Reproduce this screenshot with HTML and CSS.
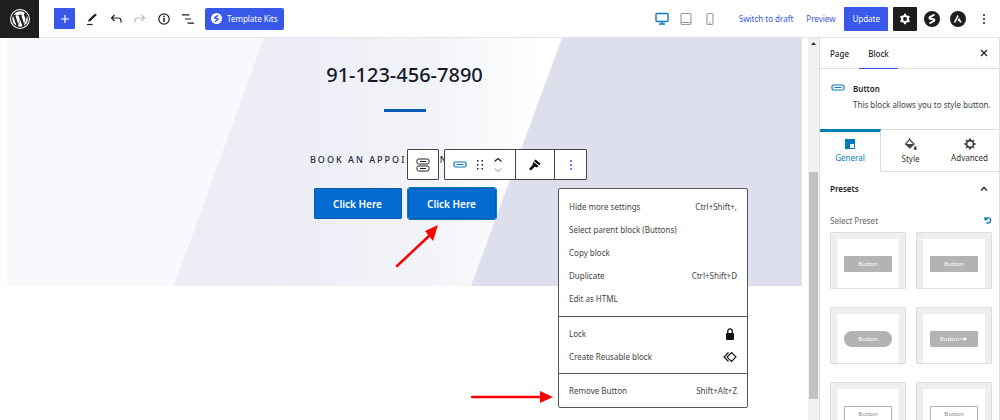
FILE: index.html
```html
<!DOCTYPE html>
<html lang="en">

<head>
    <meta charset="UTF-8">
    <title>Edit Page</title>
    <link rel="stylesheet" href="styles.css">
</head>

<body>
    <header class="topbar">
        <a href="#" class="wp-logo" aria-label="View Pages">
            <svg width="20" height="20" viewBox="0 0 24 24" fill="#fff">
                <path d="M12 0a12 12 0 1 0 0 24 12 12 0 0 0 0-24zm0 1.300a10.700 10.700 0 1 1 0 21.400 10.700 10.700 0 0 1 0-21.400z" />
                <path d="M2.800 12c0 3.700 2.100 6.800 5.200 8.300L3.600 8.200A9 9 0 0 0 2.800 12zm15.500-.5c0-1.100-.4-1.900-.8-2.500-.5-.8-.9-1.500-.9-2.300 0-.9.7-1.700 1.600-1.700h.1A9.200 9.200 0 0 0 4.300 7h.6c1 0 2.500-.1 2.500-.1.500 0 .5.700.1.800l-1.100.1 3.400 10.300 2.100-6.200L10.400 7.800l-1-.1c-.5 0-.4-.8.100-.8 0 0 1.500.1 2.500.1s2.500-.1 2.500-.1c.5 0 .6.700.1.800l-1.100.1 3.400 10.200 1-3.100c.4-1.300.4-2.500.4-3.400zm-6.100 1.300-2.800 8a9.200 9.200 0 0 0 5.700-.1l-2.900-7.900zm7.900-5.200c0 .3.100.6.100 1 0 1-.2 2.100-.7 3.500l-2.800 8.100A9.200 9.200 0 0 0 20.100 7.600z" />
            </svg>
        </a>
        <div class="tools">
            <button class="inserter" aria-label="Add block">
                <svg width="10" height="10" viewBox="0 0 10 10" stroke="#fff" stroke-width="1.200"><path d="M5 1v8M1 5h8" /></svg>
            </button>
            <button class="icon-btn" aria-label="Tools">
                <svg width="14" height="14" viewBox="0 0 14 14"><path d="M3 9.800 3.700 7.500 9.800 1.800Q10.800 1.500 11.800 3L5.500 9z" fill="#1e1e1e" /><path d="M2 12.500h5.500" stroke="#1e1e1e" stroke-width="1.200" /></svg>
            </button>
            <button class="icon-btn" aria-label="Undo">
                <svg width="14" height="14" viewBox="0 0 14 14" fill="none" stroke="#1e1e1e" stroke-width="1.200"><path d="M5.500 3 2.500 6l3 3M2.500 6H9q3 0 3 2.500v2" /></svg>
            </button>
            <button class="icon-btn" aria-label="Redo" disabled>
                <svg width="14" height="14" viewBox="0 0 14 14" fill="none" stroke="#bbb" stroke-width="1.200"><path d="m8.500 3 3 3-3 3M11.500 6H5Q2 6 2 8.500v2" /></svg>
            </button>
            <button class="icon-btn" aria-label="Details">
                <svg width="14" height="14" viewBox="0 0 14 14" fill="none" stroke="#1e1e1e"><circle cx="7" cy="7" r="5.200" stroke-width="1.200" /><path d="M7 6v4M7 3.800v1.400" stroke-width="1.500" /></svg>
            </button>
            <button class="icon-btn" aria-label="List view">
                <svg width="14" height="14" viewBox="0 0 14 14" stroke="#1e1e1e" stroke-width="1.200"><path d="M1 2.800h7.500M4 7h6M6.500 11.200H13" /></svg>
            </button>
        </div>
        <button class="kits">
            <svg width="11" height="11" viewBox="0 0 16 16"><circle cx="8" cy="8" r="8" fill="#fff" /><path d="M10.500 3.500 5.700 6.300q-.8 1 .6 1.400l3.300.6q1.400.6.3 1.600L5.500 12.500" fill="none" stroke="#3858e9" stroke-width="2" /></svg>
            Template Kits
        </button>
        <div class="actions">
            <div class="devices">
                <button class="icon-btn" aria-label="Desktop">
                    <svg width="14" height="14" viewBox="0 0 14 14" fill="none" stroke="#0a7ab8" stroke-width="1.400"><rect x="1" y="1.500" width="12" height="8" rx="1" /><path d="M7 9.500v2M4 12h6" /></svg>
                </button>
                <button class="icon-btn" aria-label="Tablet">
                    <svg width="14" height="14" viewBox="0 0 14 14" fill="none" stroke="#999" stroke-width="1.100"><rect x="2" y="1.500" width="10" height="11" rx="1.200" /><path d="M2 10.500h10" /></svg>
                </button>
                <button class="icon-btn" aria-label="Mobile">
                    <svg width="14" height="14" viewBox="0 0 14 14" fill="none" stroke="#999" stroke-width="1.100"><rect x="4" y="1.500" width="6" height="11" rx="1.200" /><path d="M6 11h2" /></svg>
                </button>
            </div>
            <a href="#">Switch to draft</a>
            <a href="#">Preview</a>
            <button class="update">Update</button>
            <button class="settings" aria-label="Settings">
                <svg width="12" height="12" viewBox="0 0 12 12"><circle cx="6" cy="6" r="3" fill="none" stroke="#fff" stroke-width="2" /><path d="M6 .8v2M6 9.200v2M1.500 3.400l1.700 1M8.800 7.600l1.700 1M1.500 8.600l1.700-1M8.800 4.400l1.700-1" stroke="#fff" stroke-width="2" /></svg>
            </button>
            <button class="round" aria-label="Spectra">
                <svg width="16" height="16" viewBox="0 0 16 16"><circle cx="8" cy="8" r="8" fill="#1e1e1e" /><path d="M10.500 3.500 5.700 6.300q-.8 1 .6 1.400l3.300.6q1.400.6.3 1.600L5.500 12.500" fill="none" stroke="#fff" stroke-width="2" /></svg>
            </button>
            <button class="round" aria-label="Astra">
                <svg width="16" height="16" viewBox="0 0 16 16"><circle cx="8" cy="8" r="8" fill="#1e1e1e" /><path d="M7.600 3.800 8.500 5.600 5.500 11.500H3.700zM9 6.500 11.800 11.500H10L9.200 9.900H7.500z" fill="#fff" /></svg>
            </button>
            <button class="more" aria-label="Options">
                <svg width="4" height="12" viewBox="0 0 4 12" fill="#1e1e1e"><circle cx="2" cy="2" r="1" /><circle cx="2" cy="6" r="1" /><circle cx="2" cy="10" r="1" /></svg>
            </button>
        </div>
    </header>

    <div class="editor">
        <main class="canvas">
            <section class="hero">
                <svg class="hero-bg" viewBox="0 0 795 248" preserveAspectRatio="none">
                    <defs>
                        <linearGradient id="fade" gradientUnits="userSpaceOnUse" x1="250" y1="0" x2="540" y2="0">
                            <stop offset="0" stop-color="#ecedf5" />
                            <stop offset=".6" stop-color="#f3f4f9" />
                            <stop offset="1" stop-color="#fff" />
                        </linearGradient>
                    </defs>
                    <rect width="795" height="248" fill="#f8f9fc" />
                    <path d="M257 0H555L464 248H167z" fill="url(#fade)" />
                    <path d="M555 0H795V248H464z" fill="#dddfec" />
                </svg>
                <h2>91-123-456-7890</h2>
                <hr>
                <p class="book">BOOK AN APPOINTMENT TODAY</p>
                <div class="buttons">
                    <button class="cta">Click Here</button>
                    <button class="cta selected">Click Here</button>
                </div>
            </section>

            <div class="toolbar">
                <div class="group">
                    <button class="parent" aria-label="Select Buttons">
                        <svg width="14" height="14" viewBox="0 0 14 14" fill="none" stroke="#1e1e1e"><rect x="1" y="1" width="12" height="5" rx="1.500" /><rect x="1" y="8" width="12" height="5" rx="1.500" /><path d="M4 3.500h6M4 10.500h6" /></svg>
                    </button>
                </div>
                <div class="group">
                    <div class="cell wide">
                        <button aria-label="Button">
                            <svg width="14" height="8" viewBox="0 0 14 8" fill="none" stroke="#0a7ab8"><rect x="1" y="1" width="12" height="5" rx="1.500" stroke-width="1.200" /><path d="M3.500 3.500h7" /></svg>
                        </button>
                        <button aria-label="Drag">
                            <svg width="8" height="12" viewBox="0 0 8 12" fill="#1e1e1e"><path d="M1 1h1.500v1.500H1zM5.500 1H7v1.500H5.500zM1 5h1.500v1.500H1zM5.500 5H7v1.500H5.500zM1 9h1.500v1.500H1zM5.500 9H7v1.500H5.500z" /></svg>
                        </button>
                        <button aria-label="Move">
                            <svg width="10" height="16" viewBox="0 0 10 16" fill="none" stroke-width="1.200"><path d="m1.500 4.500 3.500-3 3.500 3" stroke="#1e1e1e" /><path d="m1.500 11.500 3.500 3 3.500-3" stroke="#bbb" /></svg>
                        </button>
                    </div>
                    <div class="cell">
                        <button aria-label="Copy styles">
                            <svg width="14" height="14" viewBox="0 0 14 14" fill="#000"><path d="m7.500 1.500 5 4.200-1.300 1.600-5.200-4.200zM5.300 3.800l5.200 4.200-1.600 1.500-2-1-4 4-1.900-1.500 3.600-3.900z" /></svg>
                        </button>
                    </div>
                    <div class="cell small">
                        <button aria-label="Options">
                            <svg width="4" height="12" viewBox="0 0 4 12" fill="#3858e9"><circle cx="2" cy="2" r="1" /><circle cx="2" cy="6" r="1" /><circle cx="2" cy="10" r="1" /></svg>
                        </button>
                    </div>
                </div>
            </div>

            <div class="menu">
                <div class="menu-group">
                    <button>Hide more settings <span>Ctrl+Shift+,</span></button>
                    <button>Select parent block (Buttons)</button>
                    <button>Copy block</button>
                    <button>Duplicate <span>Ctrl+Shift+D</span></button>
                    <button>Edit as HTML</button>
                </div>
                <div class="menu-group">
                    <button>Lock
                        <svg width="14" height="14" viewBox="0 0 14 14"><rect x="3" y="6" width="8" height="7" rx="1" fill="#111" /><path d="M4.800 6.500V4a2.200 2.200 0 0 1 4.400 0v2.500" fill="none" stroke="#111" stroke-width="1.300" /></svg>
                    </button>
                    <button>Create Reusable block
                        <svg width="14" height="14" viewBox="0 0 14 14" fill="none" stroke="#111" stroke-width="1.100"><path d="m8.500 2.500 4.500 4.500-4.500 4.500L4 7zM5.500 2.500 1 7l4.500 4.500" /></svg>
                    </button>
                </div>
                <div class="menu-group">
                    <button>Remove Button <span>Shift+Alt+Z</span></button>
                </div>
            </div>

            <svg class="arrow arrow-up" width="44" height="44" viewBox="0 0 44 44"><path d="M2 42 34 12" stroke="#f00" stroke-width="2.500" stroke-linecap="round" /><path d="M43 1 38 17 30 7z" fill="#f00" /></svg>
            <svg class="arrow arrow-right" width="82" height="12" viewBox="0 0 82 12"><path d="M1 6h70" stroke="#f00" stroke-width="2.500" stroke-linecap="round" /><path d="M69 0 82 6 69 12z" fill="#f00" /></svg>
        </main>

        <div class="scrollbar">
            <svg width="11" height="11" viewBox="0 0 11 11"><path d="M3 7h5L5.500 4z" fill="#333" /></svg>
            <div class="thumb"></div>
        </div>

        <aside class="sidebar">
            <div class="panel-tabs">
                <button>Page</button>
                <button class="active">Block</button>
                <button class="close" aria-label="Close settings">
                    <svg width="8" height="8" viewBox="0 0 8 8" stroke="#1e1e1e" stroke-width="1.300"><path d="m1 1 6 6M7 1 1 7" /></svg>
                </button>
            </div>
            <div class="card">
                <svg width="14" height="8" viewBox="0 0 14 8" fill="none" stroke="#0a7ab8"><rect x="1" y="1" width="12" height="5" rx="1.500" stroke-width="1.200" /><path d="M3.500 3.500h7" /></svg>
                <div>
                    <h3>Button</h3>
                    <p>This block allows you to style button.</p>
                </div>
            </div>
            <div class="style-tabs">
                <button class="active">
                    <svg width="12" height="12" viewBox="0 0 12 12"><path d="M1 1h10v10H1z" fill="#007cba" /><path d="M6 6h4v4H6z" fill="#fff" /></svg>
                    General
                </button>
                <button>
                    <svg width="14" height="14" viewBox="0 0 14 14"><path d="M5.500 1v2M5.500 2.500 10 7 6 11 1.500 7z" fill="none" stroke="#444" stroke-width="1.200" /><path d="M1.500 7H10L6 11zM11.200 8.500q3 4.500 0 4.500t0-4.500" fill="#444" /></svg>
                    Style
                </button>
                <button>
                    <svg width="12" height="12" viewBox="0 0 12 12" fill="none" stroke="#444"><circle cx="6" cy="6" r="3.500" stroke-width="1.800" /><path d="M6 .5v1.500M6 10v1.500M.5 6H2M10 6h1.500M2.100 2.100l1 1M8.900 8.900l1 1M2.100 9.900l1-1M8.900 3.100l1-1" stroke-width="2" /></svg>
                    Advanced
                </button>
            </div>
            <button class="section-title">
                Presets
                <svg width="8" height="6" viewBox="0 0 8 6" fill="none" stroke="#1e1e1e" stroke-width="1.300"><path d="m1 4.500 3-3 3 3" /></svg>
            </button>
            <div class="preset-head">
                Select Preset
                <button aria-label="Reset">
                    <svg width="8" height="8" viewBox="0 0 8 8" fill="none" stroke="#0a7ab8" stroke-width="1.300"><path d="M1 1v2.500h2.500M1.500 3.200a2.700 2.700 0 1 1 .8 3.300" /></svg>
                </button>
            </div>
            <div class="presets">
                <button class="preset"><span class="inner"><span class="sample">Button</span></span></button>
                <button class="preset"><span class="inner"><span class="sample soft">Button</span></span></button>
                <button class="preset"><span class="inner"><span class="sample pill">Button</span></span></button>
                <button class="preset"><span class="inner"><span class="sample soft">Button
                    <svg width="8" height="6" viewBox="0 0 8 6"><path d="M0 3h5" stroke="#fff" /><path d="M4 1 7 3 4 5z" fill="#fff" /></svg></span></span></button>
                <button class="preset"><span class="inner"><span class="sample outline">Button</span></span></button>
                <button class="preset"><span class="inner"><span class="sample outline soft">Button</span></span></button>
            </div>
        </aside>
    </div>
</body>

</html>
```

FILE: styles.css
```css
* {
    box-sizing: border-box;
}

body {
    margin: 0;
    height: 100vh;
    display: flex;
    flex-direction: column;
    overflow: hidden;
    font-family: "Noto Sans", sans-serif;
    font-size: 8px;
    color: #1e1e1e;
    background: #fff;
}

button {
    font: inherit;
    color: inherit;
    background: none;
    border: none;
    padding: 0;
    cursor: pointer;
}

svg {
    display: block;
    flex: none;
}

h2,
h3,
p {
    margin: 0;
}

.topbar {
    flex: none;
    height: 38px;
    display: flex;
    align-items: center;
    border-bottom: 1px solid #e4e4e4;
}

.wp-logo {
    width: 39px;
    height: 38px;
    display: flex;
    align-items: center;
    justify-content: center;
    background: #1e1e1e;
}

.tools {
    display: flex;
    align-items: center;
    gap: 10px;
    margin-left: 15px;
}

.inserter {
    width: 21px;
    height: 21px;
    display: flex;
    align-items: center;
    justify-content: center;
    background: #3858e9;
    border-radius: 1px;
}

.icon-btn {
    width: 14px;
    height: 14px;
}

.kits {
    display: flex;
    align-items: center;
    gap: 5px;
    height: 22px;
    margin-left: 10px;
    padding: 0 6px;
    color: #fff;
    background: #3858e9;
    border-radius: 2px;
}

.actions {
    display: flex;
    align-items: center;
    gap: 10px;
    margin-left: auto;
    padding-right: 14px;
}

.actions a {
    color: #3858e9;
    text-decoration: none;
    margin-right: 3px;
}

.devices {
    display: flex;
    gap: 10px;
    margin-right: 12px;
}

.update {
    height: 24px;
    padding: 0 8px;
    margin-left: -4px;
    color: #fff;
    background: #3858e9;
    border-radius: 1px;
}

.settings {
    width: 24px;
    height: 24px;
    margin-left: -5px;
    display: flex;
    align-items: center;
    justify-content: center;
    background: #1e1e1e;
    border-radius: 1px;
}

.round {
    margin-left: -3px;
    margin-right: 3px;
}

.more {
    margin-left: 3px;
}

.editor {
    flex: 1;
    min-height: 0;
    display: flex;
}

.canvas {
    flex: 1;
    min-width: 0;
    position: relative;
    padding: 0 6px 0 7px;
}

.hero {
    position: relative;
    display: flex;
    flex-direction: column;
    align-items: center;
    padding: 23px 0 67px;
}

.hero-bg {
    position: absolute;
    inset: 0;
    width: 100%;
    height: 100%;
    z-index: -1;
}

.hero h2 {
    font-size: 20px;
    line-height: 28px;
    font-weight: 500;
    color: #15192b;
}

.hero hr {
    width: 42px;
    height: 3px;
    margin: 20px 0 42px;
    border: none;
    background: #0b5cb5;
}

.book {
    font-size: 9px;
    line-height: 12px;
    font-weight: 500;
    letter-spacing: 2px;
    color: #25293a;
}

.buttons {
    display: flex;
    gap: 6px;
    margin-top: 22px;
}

.cta {
    width: 88px;
    height: 31px;
    font-size: 10px;
    font-weight: 600;
    color: #fff;
    background: #046bd2;
    border: 1px solid #0a5cb0;
    border-radius: 1px;
}

.cta.selected {
    outline: 1px solid #0a7ab8;
    border-radius: 2px;
}

.toolbar {
    position: absolute;
    left: 407px;
    top: 111px;
    display: flex;
    gap: 5px;
}

.group {
    display: flex;
    height: 31px;
    background: #fff;
    border: 1px solid #444;
    border-radius: 1px;
}

.group button {
    display: flex;
    align-items: center;
}

.parent {
    padding: 0 8px;
}

.cell {
    width: 39px;
    display: flex;
    align-items: center;
    justify-content: center;
    gap: 9px;
}

.cell.wide {
    width: 70px;
    padding-right: 4px;
}

.cell.small {
    width: 32px;
}

.cell + .cell {
    border-left: 1px solid #444;
}

.menu {
    position: absolute;
    left: 558px;
    top: 150px;
    width: 190px;
    background: #fff;
    border: 1px solid #555;
    border-radius: 2px;
    color: #444;
}

.menu-group {
    padding: 6px 10px;
}

.menu-group + .menu-group {
    padding: 5px 10px;
    border-top: 1px solid #555;
}

.menu button {
    display: flex;
    align-items: center;
    justify-content: space-between;
    width: 100%;
    height: 23px;
}

.arrow {
    position: absolute;
}

.arrow-up {
    left: 395px;
    top: 186px;
}

.arrow-right {
    left: 471px;
    top: 353px;
}

.scrollbar {
    width: 11px;
    background: #f1f1f1;
}

.thumb {
    width: 9px;
    height: 227px;
    margin: 123px auto 0;
    background: #c1c1c1;
}

.sidebar {
    width: 181px;
    border-left: 1px solid #e0e0e0;
    border-right: 1px solid #e0e0e0;
}

.panel-tabs {
    display: flex;
    height: 31px;
    border-bottom: 1px solid #e0e0e0;
    font-weight: 500;
}

.panel-tabs button {
    width: 39px;
    margin-bottom: -1px;
    border-bottom: 1px solid transparent;
}

.panel-tabs .active {
    border-color: #3858e9;
}

.panel-tabs .close {
    width: auto;
    margin-left: auto;
    padding-right: 11px;
}

.card {
    display: flex;
    gap: 8px;
    padding: 12px 0 0 11px;
    height: 60px;
    white-space: nowrap;
}

.card svg {
    margin-top: 3px;
}

.card h3 {
    font-size: 8px;
    line-height: 15px;
    font-weight: 600;
}

.card p {
    line-height: 17px;
    color: #444;
}

.style-tabs {
    display: grid;
    grid-template-columns: 61px 1fr 1fr;
    height: 43px;
}

.style-tabs button {
    display: flex;
    flex-direction: column;
    align-items: center;
    justify-content: center;
    gap: 2px;
    border-top: 1px solid #ddd;
    border-bottom: 1px solid #ddd;
    color: #333;
}

.style-tabs .active {
    border-top: 3px solid #007cba;
    border-right: 1px solid #ddd;
    border-bottom: none;
    padding-bottom: 4px;
    color: #007cba;
}

.section-title {
    display: flex;
    align-items: center;
    justify-content: space-between;
    width: 100%;
    height: 33px;
    padding: 0 11px 0 10px;
    font-weight: 600;
}

.preset-head {
    display: flex;
    align-items: center;
    justify-content: space-between;
    height: 27px;
    padding: 3px 7px 0 10px;
    color: #666;
}

.presets {
    display: grid;
    grid-template-columns: 1fr 1fr;
    gap: 18px 10px;
    padding: 0 7px 0 10px;
}

.preset {
    height: 57px;
    padding: 6px 6px 0;
    background: #eee;
    border: 1px solid #ddd;
    border-radius: 1px;
}

.inner {
    display: flex;
    align-items: center;
    justify-content: center;
    height: 100%;
    background: #fff;
}

.sample {
    display: flex;
    align-items: center;
    justify-content: center;
    gap: 1px;
    width: 48px;
    height: 16px;
    font-size: 6px;
    color: #fff;
    background: #b3b3b3;
}

.sample.soft {
    border-radius: 1px;
}

.sample.pill {
    border-radius: 8px;
}

.sample.outline {
    color: #888;
    background: #fff;
    border: 1px solid #b3b3b3;
}
```
